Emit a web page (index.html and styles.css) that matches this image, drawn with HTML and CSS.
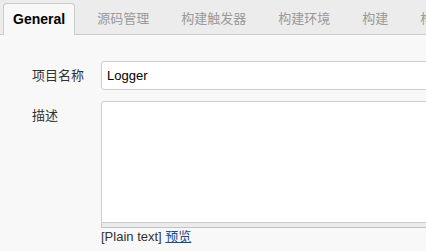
FILE: index.html
```html
<!DOCTYPE html>
<html lang="zh">
<head>
<meta charset="utf-8">
<link rel="stylesheet" href="styles.css">
</head>
<body>
<div class="tabbar">
  <div class="tab active">General</div>
  <div class="tab">源码管理</div>
  <div class="tab">构建触发器</div>
  <div class="tab">构建环境</div>
  <div class="tab">构建</div>
  <div class="tab">构建后操作</div>
</div>
<div class="form">
  <div class="label">项目名称</div>
  <div class="field"><input class="text" type="text" value="Logger"></div>
  <div class="label">描述</div>
  <div class="field">
    <textarea class="area"></textarea>
    <div class="handle"></div>
    <div class="hint">[Plain text] <a href="#" class="preview">预览</a></div>
  </div>
</div>
</body>
</html>
```
FILE: styles.css
```css
html, body {
  margin: 0;
  padding: 0;
  overflow: hidden;
  background: #f8f8f8;
  font-family: "Liberation Sans", Arial, "Noto Sans CJK SC", sans-serif;
  font-size: 13px;
  color: #333;
}
.tabbar {
  display: flex;
  gap: 12px;
  height: 31px;
  padding: 3px 0 0 3px;
  background: #ececec;
  border-bottom: 1px solid #cccccc;
  white-space: nowrap;
}
.tab {
  flex: none;
  padding: 0 10px;
  line-height: 31px;
  color: #9a9a9a;
  font-size: 13px;
}
.tab.active {
  padding: 0 9px;
  border: 1px solid #cccccc;
  border-bottom: none;
  border-radius: 4px 4px 0 0;
  background: #f8f8f8;
  color: #000;
  font-weight: bold;
  font-size: 14px;
  height: 31px;
  margin-bottom: -1px;
  line-height: 30px;
}
.form {
  display: grid;
  grid-template-columns: 69px 360px;
  row-gap: 11px;
  padding: 26px 0 0 32px;
}
.label {
  line-height: 29px;
  color: #333;
}
.text {
  box-sizing: border-box;
  display: block;
  width: 100%;
  height: 29px;
  margin: 0;
  padding: 0 5px;
  border: 1px solid #cccccc;
  border-radius: 3px;
  background: #fff;
  font-family: "Liberation Sans", Arial, sans-serif;
  font-size: 13px;
  color: #000;
  outline: none;
}
.area {
  box-sizing: border-box;
  display: block;
  width: 100%;
  height: 122px;
  margin: 0;
  border: 1px solid #cccccc;
  border-radius: 3px 3px 0 0;
  background: #fff;
  resize: none;
  outline: none;
}
.handle {
  height: 4px;
  background: #ebebeb;
  border: 1px solid #c4c4c4;
  border-top: none;
}
.hint {
  line-height: 17px;
  color: #333;
}
.preview {
  color: #204a87;
  text-decoration: underline;
}
```
